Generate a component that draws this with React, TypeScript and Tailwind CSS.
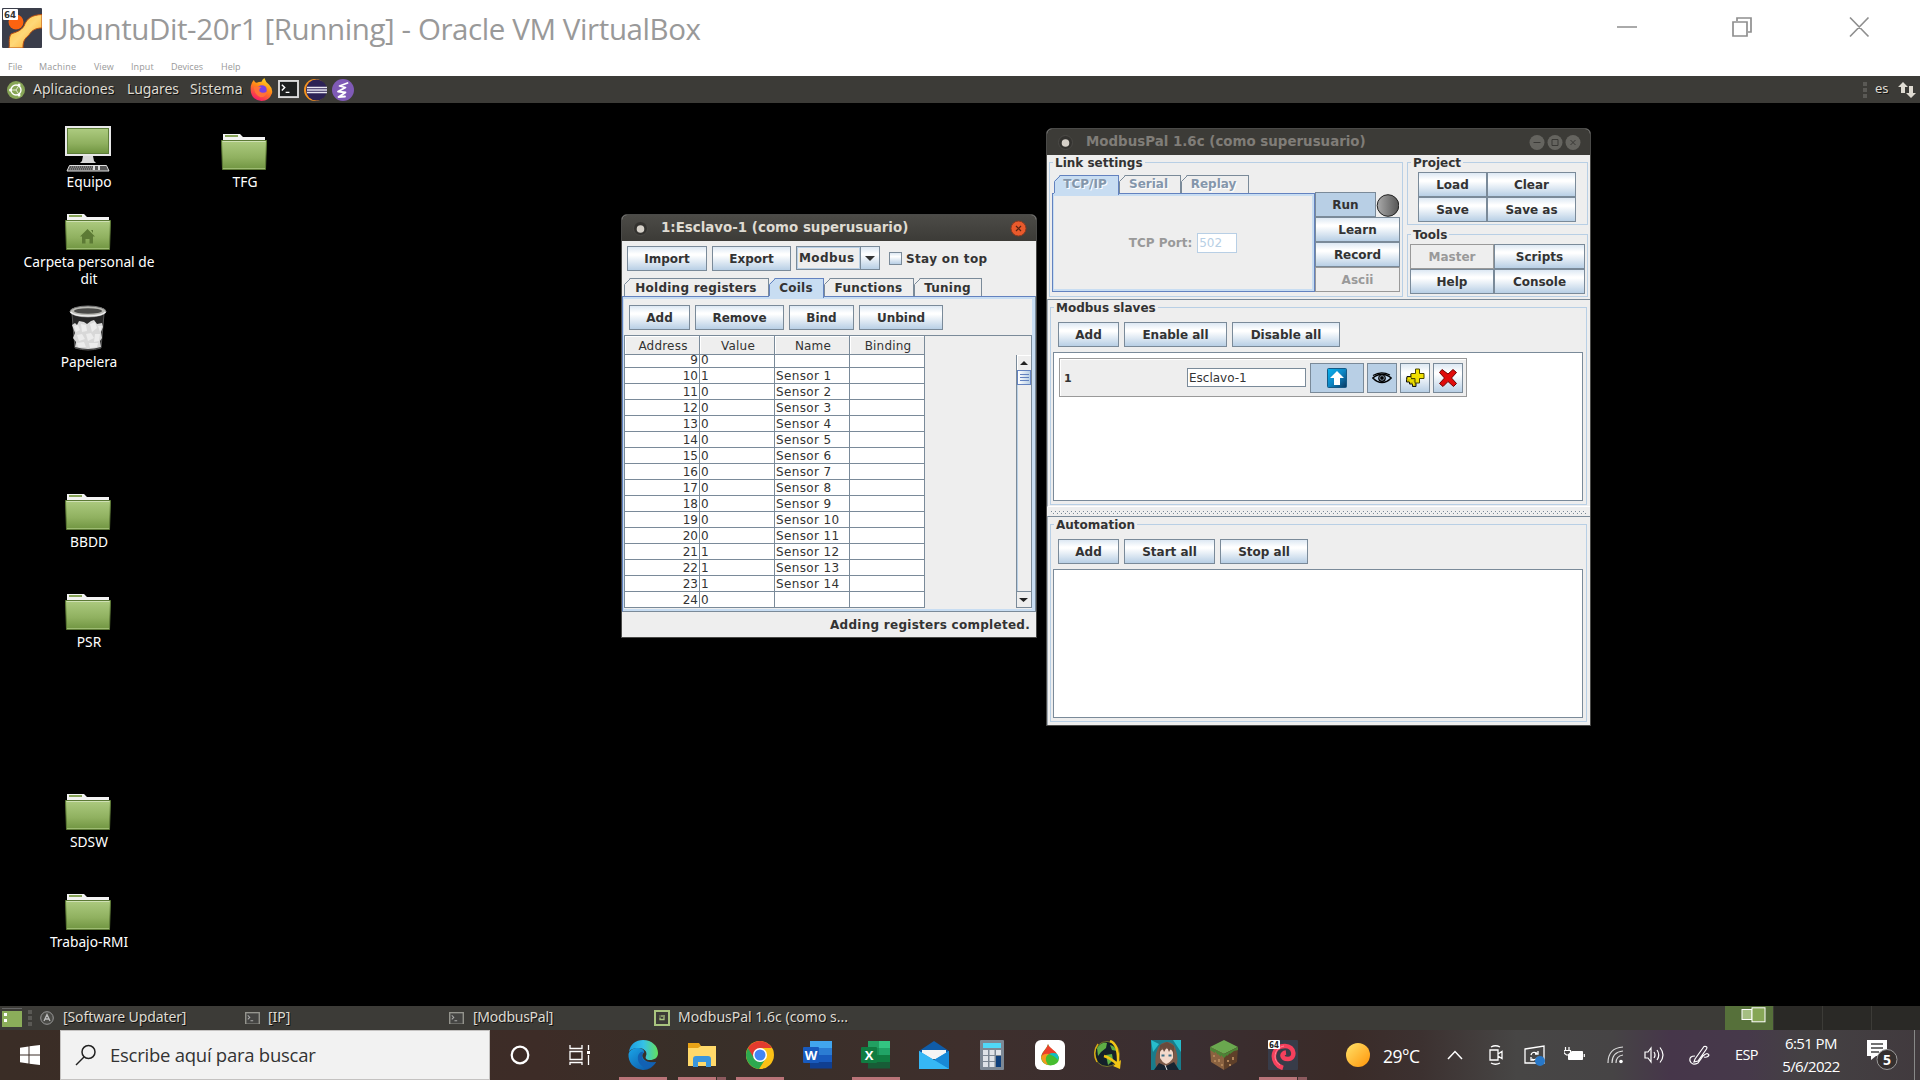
import React from "react";

type Kids = { children?: React.ReactNode };

const METAL =
  "bg-[linear-gradient(180deg,#dde8f3_0%,#ffffff_30%,#ffffff_36%,#b8cfe5_100%)] border border-[#7a8a99] text-[#333]";

function Btn({ w, children, state = "normal" }: Kids & { w: string; state?: "normal" | "on" | "off" }) {
  const look =
    state === "on"
      ? "bg-[#b8cfe5] border border-[#7a8a99] text-[#333]"
      : state === "off"
        ? "bg-[#eee] border border-[#999] text-[#999]"
        : METAL;
  return (
    <div className={`flex h-[25px] shrink-0 items-center justify-center pt-px font-bold ${look} ${w}`}>{children}</div>
  );
}

function Group({ title, className, children }: Kids & { title: string; className: string }) {
  return (
    <div className={`relative border border-[#b8cfe5] ${className}`}>
      <span className="absolute -top-2 left-[3px] bg-[#eee] px-[2px] font-bold leading-[16px] text-[#333]">{title}</span>
      {children}
    </div>
  );
}

function Tab({ w, on, off, children }: Kids & { w: string; on?: boolean; off?: boolean }) {
  return (
    <div className={`relative h-[18px] shrink-0 ${w}`}>
      <div
        className={`absolute inset-0 border-t border-r ${on ? "border-[#6382bf] bg-[#c8ddf2] -bottom-[2px]" : "border-[#7a8a99] bg-[#eee]"} [clip-path:polygon(6px_0,100%_0,100%_100%,0_100%,0_6px)]`}
      />
      <svg className="absolute left-0 top-0" width="7" height="18">
        <path d="M.5 18V6.5L6.5.5" fill="none" stroke={on ? "#6382bf" : "#7a8a99"} />
      </svg>
      <div
        className={`relative flex h-full items-center justify-center font-bold ${off ? "pr-[3px] text-[#8496ab] [text-shadow:1px_1px_0_#fff]" : "pr-px pt-px tracking-[0.25px] text-[#333]"}`}
      >
        {children}
      </div>
    </div>
  );
}

function Folder({ home }: { home?: boolean }) {
  return (
    <svg width="46" height="37" viewBox="0 0 46 37">
      <defs>
        <linearGradient id="fold" x1="0" y1="0" x2="0" y2="1">
          <stop offset="0" stopColor="#adcb80" />
          <stop offset=".6" stopColor="#8fb05f" />
          <stop offset="1" stopColor="#6f9440" />
        </linearGradient>
      </defs>
      <path d="M2 0H19L22 3H44V8H2Z" fill="#f4f4f4" />
      <rect x="4" y="1" width="13" height="2" fill="#8aa65a" />
      <path d="M.5 6.500H45.500L44.500 35.500H1.500Z" fill="url(#fold)" stroke="#5c7a35" />
      <path d="M1.500 7.500H44.500" stroke="#cfe0b4" />
      <path d="M2 34.500H44" stroke="#9dbb72" />
      {home && <path d="M22.500 15L30 22.500H28V29.500H24.500V25H20.500V29.500H17V22.500H15ZM26 16h2v3z" fill="#5c7a35" />}
    </svg>
  );
}

function Computer() {
  return (
    <svg width="46" height="46" viewBox="0 0 46 46">
      <rect width="46" height="30" fill="#e8e8e8" />
      <rect x="2.500" y="2.500" width="41" height="25" fill="url(#fold)" stroke="#5d7d38" />
      <path d="M18 30H28L29 35L31 37H15L17 35Z" fill="#d8d8d8" />
      <path d="M4.500 39.500H41.500L44 45H2Z" fill="#555" stroke="#e0e0e0" />
      <path d="M6 41H28M5 43H28" stroke="#aaa" strokeDasharray="1 1" />
      <path d="M29 40V44M34 40V44" stroke="#ddd" strokeWidth="2" />
    </svg>
  );
}

function Trash() {
  return (
    <svg width="38" height="46" viewBox="0 0 38 46">
      <path d="M3 9L6 43Q19 47 32 43L35 9Z" fill="#262626" stroke="#555" />
      <path d="M3 20L6 18L8 20L10 16L15 17L18 19L22 16L25 15L28 19L33 18L34 22L32 27L33 33L31 36L32 42Q19 46 6 42L7 37L4 33L6 28Z" fill="#d8d8d8" />
      <path d="M5 21L9 20L11 25L7 27ZM12 19L17 20L18 26L13 27ZM21 19L26 17L28 23L23 27ZM29 21L33 21L31 27ZM8 30L13 29L16 34L10 36ZM17 29L22 28L25 33L19 36ZM26 29L31 29L30 36L25 37ZM8 38L15 37L17 42L9 42ZM20 38L29 38L28 42L21 43Z" fill="#ececec" />
      <ellipse cx="19" cy="6.500" rx="18" ry="5.500" fill="#b9b9b4" stroke="#777" />
      <ellipse cx="19" cy="6" rx="14" ry="2.800" fill="#4a4a48" />
      <path d="M1.500 7Q5 11 19 11T36.500 7" fill="none" stroke="#eee" strokeWidth="1.500" />
    </svg>
  );
}

function DeskIcon({ pos, label, children, w = "w-[140px]" }: Kids & { pos: string; label: string; w?: string }) {
  return (
    <div className={`absolute flex flex-col items-center ${w} ${pos}`}>
      {children}
      <div className="pl-[2px] text-center text-[13.750px] leading-[17px] text-white">{label}</div>
    </div>
  );
}

const ROWS: [number, number, string][] = [
  [9, 0, ""], [10, 1, "Sensor 1"], [11, 0, "Sensor 2"], [12, 0, "Sensor 3"], [13, 0, "Sensor 4"], [14, 0, "Sensor 5"],
  [15, 0, "Sensor 6"], [16, 0, "Sensor 7"], [17, 0, "Sensor 8"], [18, 0, "Sensor 9"], [19, 0, "Sensor 10"],
  [20, 0, "Sensor 11"], [21, 1, "Sensor 12"], [22, 1, "Sensor 13"], [23, 1, "Sensor 14"], [24, 0, ""],
];

function Dot() {
  return (
    <svg width="17" height="17" viewBox="0 0 17 17">
      <circle cx="8.500" cy="8.500" r="7" fill="#33322f" stroke="#4b4a46" />
      <circle cx="8.500" cy="9" r="3.800" fill="#d5d0c8" />
    </svg>
  );
}

function SlaveWindow() {
  return (
    <div className="absolute left-[621px] top-[138px] flex h-[424px] w-[416px] flex-col overflow-hidden rounded-t-[6px] border border-[#4a4a48] bg-[#eee] text-[12px] text-[#333]">
      <div className="flex h-[26px] shrink-0 items-center bg-[linear-gradient(#4c4b47,#3c3b37)] pl-[10px] pr-[9px]">
        <Dot />
        <span className="ml-[12px] text-[13.400px] font-bold leading-[16px] text-[#dfdbd2]">1:Esclavo-1 (como superusuario)</span>
        <svg className="ml-auto" width="17" height="17" viewBox="0 0 17 17">
          <circle cx="8.500" cy="8.500" r="7.500" fill="#e95a2c" stroke="#8c3a20" />
          <path d="M6 6L11 11M11 6L6 11" stroke="#5b2413" strokeWidth="1.200" />
        </svg>
      </div>
      <div className="flex h-[37px] shrink-0 pl-[5px] pt-[5px]">
        <Btn w="w-[80px]">Import</Btn>
        <Btn w="w-[79px] ml-[5px]">Export</Btn>
        <div className="ml-[5px] flex h-[24px] w-[84px] border border-[#7a8a99]">
          <div className="flex w-[63px] items-center border border-[#b8cfe5] pl-px font-bold tracking-[0.4px]">Modbus</div>
          <div className="flex flex-1 items-center justify-center border-l border-[#7a8a99] bg-[linear-gradient(180deg,#dde8f3_0%,#ffffff_33%,#b8cfe5_100%)]">
            <svg width="10" height="5"><path d="M0 0H10L5 5Z" fill="#333" /></svg>
          </div>
        </div>
        <div className="ml-[9px] mt-[6px] h-[13px] w-[13px] border border-[#7a8a99] bg-[linear-gradient(180deg,#dde8f3_0%,#ffffff_33%,#b8cfe5_100%)]" />
        <div className="ml-[4px] flex h-[25px] items-center font-bold tracking-[0.35px]">Stay on top</div>
      </div>
      <div className="flex h-[18px] shrink-0 pl-[2px]">
        <Tab w="w-[145px]">Holding registers</Tab>
        <Tab w="w-[55px] z-10" on>Coils</Tab>
        <Tab w="w-[90px]">Functions</Tab>
        <Tab w="w-[68px]">Tuning</Tab>
      </div>
      <div className="flex h-[316px] shrink-0 flex-col border border-[#6382bf] border-b-[#7a8a99] border-r-[#7a8a99]">
        <div className="flex h-full flex-col border-y-2 border-l border-r-[3px] border-[#c8ddf2]">
          <div className="flex h-[35px] shrink-0 pl-[5px] pt-[6px]">
            <Btn w="w-[61px]">Add</Btn>
            <Btn w="w-[89px] ml-[5px]">Remove</Btn>
            <Btn w="w-[65px] ml-[5px]">Bind</Btn>
            <Btn w="w-[84px] ml-[5px]">Unbind</Btn>
          </div>
          <div className="mt-px flex h-[273px] w-[408px] flex-col border border-b-0 border-[#7a8a99]">
            <div className="flex h-[19px] w-[300px] shrink-0 text-center tracking-[0.2px]">
              {["Address", "Value", "Name", "Binding"].map((h) => (
                <div key={h} className="w-[75px] border-b border-r border-[#7a8a99] pl-[2px] leading-[20px] shadow-[inset_1px_1px_0_#fff]">{h}</div>
              ))}
            </div>
            <div className="flex min-h-0 flex-1">
              <div className="flex w-[300px] flex-col justify-end">
                {ROWS.map(([a, v, n], i) => (
                  <div key={a} className={`flex shrink-0 bg-white ${i === 0 ? "h-[13px] leading-[11px]" : "h-[16px] leading-[17px]"}`}>
                    <div className="w-[75px] border-b border-r border-[#7a8a99] pr-px text-right">{a}</div>
                    <div className="w-[75px] border-b border-r border-[#7a8a99] pl-px">{v}</div>
                    <div className="w-[75px] border-b border-r border-[#7a8a99] pl-px tracking-[0.35px]">{n}</div>
                    <div className="w-[75px] border-b border-r border-[#7a8a99]" />
                  </div>
                ))}
              </div>
              <div className="ml-auto flex w-[15px] flex-col border-l border-[#7a8a99]">
                <div className="flex h-[15px] items-center justify-center pr-px shadow-[inset_1px_1px_0_#fff]">
                  <svg width="8" height="4"><path d="M0 4H8L4 0Z" fill="#222" /></svg>
                </div>
                <div className="flex h-[15px] flex-col items-center justify-center gap-px border border-[#6382bf] bg-[linear-gradient(90deg,#fff,#b8cfe5)]">
                  <div className="h-px w-[9px] bg-[#6382bf]" />
                  <div className="mt-px h-px w-[9px] bg-[#6382bf]" />
                  <div className="mt-px h-px w-[9px] bg-[#6382bf]" />
                </div>
                <div className="flex-1 border-l border-[#b8cfe5]" />
                <div className="flex h-[17px] items-center justify-center border-y border-[#7a8a99] pr-px">
                  <svg width="9" height="4"><path d="M0 0H9L4.500 4Z" fill="#222" /></svg>
                </div>
              </div>
            </div>
          </div>
        </div>
      </div>
      <div className="flex h-[25px] items-center justify-end pr-[6px] font-bold tracking-[0.27px]">Adding registers completed.</div>
    </div>
  );
}

function MainWindow() {
  return (
    <div className="absolute left-[1046px] top-[52px] flex h-[598px] w-[545px] flex-col overflow-hidden rounded-t-[6px] border border-[#4a4a48] bg-[#eee] text-[12px] text-[#333]">
      <div className="flex h-[26px] shrink-0 items-center bg-[#3c3b37] pl-[10px] pr-[9px]">
        <Dot />
        <span className="ml-[12px] text-[13.400px] font-bold leading-[16px] text-[#807d78]">ModbusPal 1.6c (como superusuario)</span>
        <svg className="ml-auto" width="52" height="17" viewBox="0 0 52 17">
          <g fill="#65645f">
            <circle cx="8" cy="8.500" r="7.500" />
            <circle cx="26" cy="8.500" r="7.500" />
            <circle cx="44" cy="8.500" r="7.500" />
          </g>
          <path d="M4.500 8.500H11.500M23 5.500H29V11.500H23ZM41.500 6L46.500 11M46.500 6L41.500 11" fill="none" stroke="#3a3936" />
        </svg>
      </div>
      <div className="flex h-[144px] shrink-0 pl-[2px] pt-[7px]">
        <Group title="Link settings" className="h-[135px] w-[354px]">
          <div className="flex pl-[2px] pt-[12px]">
            <div className="w-[263px]">
              <div className="flex pl-[2px]">
                <Tab w="w-[65px] z-10" on off>TCP/IP</Tab>
                <Tab w="w-[62px]" off>Serial</Tab>
                <Tab w="w-[68px]" off>Replay</Tab>
              </div>
              <div className="h-[99px] border border-[#6382bf]">
                <div className="flex h-full items-center justify-center border-y-2 border-l border-r-2 border-[#c8ddf2]">
                  <span className="font-bold text-[#999]">TCP Port:</span>
                  <span className="ml-[5px] flex h-[20px] w-[40px] items-center border border-[#b8cfe5] bg-white pl-px text-[#b8cfe5]">502</span>
                </div>
              </div>
            </div>
            <div className="w-[85px] pt-[17px]">
              <div className="flex items-center">
                <Btn w="w-[61px]" state="on">Run</Btn>
                <svg width="23" height="24" viewBox="0 0 23 24">
                  <defs>
                    <linearGradient id="led"><stop offset="0" stopColor="#aaa" /><stop offset="1" stopColor="#555" /></linearGradient>
                  </defs>
                  <circle cx="12" cy="12.500" r="10.800" fill="url(#led)" stroke="#222" />
                </svg>
              </div>
              <Btn w="w-[85px]">Learn</Btn>
              <Btn w="w-[85px]">Record</Btn>
              <Btn w="w-[85px]" state="off">Ascii</Btn>
            </div>
          </div>
        </Group>
        <div className="ml-[4px]">
          <Group title="Project" className="h-[63px] w-[181px] pl-[10px] pt-[9px]">
            <div className="flex"><Btn w="w-[69px]">Load</Btn><Btn w="w-[89px]">Clear</Btn></div>
            <div className="flex"><Btn w="w-[69px]">Save</Btn><Btn w="w-[89px]">Save as</Btn></div>
          </Group>
          <Group title="Tools" className="mt-[9px] h-[63px] w-[181px] pl-[2px] pt-[9px]">
            <div className="flex"><Btn w="w-[84px]" state="off">Master</Btn><Btn w="w-[91px]">Scripts</Btn></div>
            <div className="flex"><Btn w="w-[84px]">Help</Btn><Btn w="w-[91px]">Console</Btn></div>
          </Group>
        </div>
      </div>
      <div className="h-[208px] shrink-0 border-b border-l border-t border-b-white border-l-[#a3abb5] border-t-[#7a8a99] pl-[2px] pt-[7px]">
        <Group title="Modbus slaves" className="h-[198px] w-[537px] px-[2px] pt-[14px]">
          <div className="flex pl-[5px]">
            <Btn w="w-[61px]">Add</Btn>
            <Btn w="w-[103px] ml-[5px]">Enable all</Btn>
            <Btn w="w-[108px] ml-[5px]">Disable all</Btn>
          </div>
          <div className="mt-[5px] h-[149px] w-[530px] border border-[#7a8a99] bg-white pl-[5px] pt-[5px]">
            <div className="flex h-[39px] w-[408px] border border-[#999] bg-[#eee] pl-[4px] pt-[4px] shadow-[inset_1px_1px_0_#fff]">
              <span className="w-[123px] text-[11px] font-bold leading-[31px]">1</span>
              <span className="mt-[5px] flex h-[19px] w-[119px] items-center border border-[#7a8a99] bg-white pl-px">Esclavo-1</span>
              <span className="ml-[4px] flex h-[30px] w-[54px] items-center justify-center border border-[#7a8a99] bg-[#b8cfe5]">
                <svg width="20" height="20" viewBox="0 0 20 20">
                  <defs><linearGradient id="up" x1="0" y1="0" x2="1" y2="1"><stop offset="0" stopColor="#0ab4f0" /><stop offset=".5" stopColor="#0d86c4" /><stop offset="1" stopColor="#08355e" /></linearGradient></defs>
                  <rect x=".5" y=".5" width="19" height="19" rx="1" fill="url(#up)" stroke="#165a86" />
                  <path d="M10 3L17 10H13V17H7V10H3Z" fill="#fff" />
                </svg>
              </span>
              <span className="ml-[3px] flex h-[30px] w-[30px] items-center justify-center border border-[#7a8a99] bg-[#b8cfe5]">
                <svg width="20" height="12" viewBox="0 0 20 12">
                  <path d="M.8 6Q5 2.200 10 2.200T19.200 6Q15 10.500 10 10.500T.8 6Z" fill="#b8cfe5" stroke="#000" strokeWidth="1.400" />
                  <path d="M1 3.500Q9-1.500 18 3" fill="none" stroke="#000" strokeWidth="1.200" />
                  <circle cx="10" cy="6.200" r="3.800" fill="#000" />
                  <circle cx="10" cy="6" r="2.300" fill="none" stroke="#b8cfe5" strokeWidth=".7" />
                </svg>
              </span>
              <span className={`ml-[3px] flex h-[30px] w-[30px] items-center justify-center ${METAL}`}>
                <svg width="20" height="20" viewBox="0 0 20 20">
                  <path d="M2 8.500H6V6H11V10H14V14H11V18.500H7.500V16H4.500V14H1.500V11.500Z" fill="#c9bc00" stroke="#111" />
                  <path d="M10.500 1H14.500V5.500H19V10.500H14.500V15H10V10.500H6V5.500H10.500Z" fill="#f0e000" stroke="#4b4600" />
                  <path d="M3 10.500H6M4.500 13H8.500M8.500 14V17" fill="none" stroke="#f6e800" strokeWidth="1.300" />
                </svg>
              </span>
              <span className={`ml-[3px] flex h-[30px] w-[30px] items-center justify-center ${METAL}`}>
                <svg width="20" height="20" viewBox="0 0 20 20">
                  <path d="M4 1.500L10 6L15 1.500L18.500 4.500L13.500 10L18.500 15.500L15.500 18.500L10 13.500L5 18.500L1.500 15.500L6.500 10L1.500 4.500Z" fill="#e00b0b" stroke="#6d0000" />
                </svg>
              </span>
            </div>
          </div>
        </Group>
      </div>
      <div className="flex h-[9px] shrink-0 flex-col gap-px px-[4px] pt-[4px]">
        <div className="h-px bg-[repeating-linear-gradient(90deg,#7a8a99_0_1px,#f6f6f6_1px_2px,#eee_2px_4px)]" />
        <div className="ml-[2px] h-px bg-[repeating-linear-gradient(90deg,#7a8a99_0_1px,#f6f6f6_1px_2px,#eee_2px_4px)]" />
      </div>
      <div className="flex-1 border-l border-t border-l-[#a3abb5] border-t-[#7a8a99] pl-[2px] pt-[7px]">
        <Group title="Automation" className="h-[198px] w-[537px] px-[2px] pt-[14px]">
          <div className="flex pl-[5px]">
            <Btn w="w-[61px]">Add</Btn>
            <Btn w="w-[91px] ml-[5px]">Start all</Btn>
            <Btn w="w-[88px] ml-[5px]">Stop all</Btn>
          </div>
          <div className="mt-[5px] h-[149px] w-[530px] border border-[#7a8a99] bg-white" />
        </Group>
      </div>
    </div>
  );
}

function HostTitle() {
  return (
    <div className="flex h-[76px] flex-col bg-white text-[#999]">
      <div className="flex h-[57px] items-start">
        <svg className="ml-[2px] mt-[8px]" width="40" height="40" viewBox="0 0 40 40">
          <defs><linearGradient id="vb" x1="0" y1="0" x2="1" y2="1"><stop offset="0" stopColor="#ffc02e" /><stop offset=".5" stopColor="#ffd878" /><stop offset="1" stopColor="#f9a11b" /></linearGradient></defs>
          <rect width="40" height="40" rx="1" fill="#3a3d4a" />
          <path d="M7 40C8 36 6 31 9 26C14 24 19 23 22 18C25 10 30 7 40 6.500V20C34 20 30 22 27 27C22 31 21 34 21 40Z" fill="url(#vb)" stroke="#b94d10" />
          <circle cx="14" cy="14" r="7.500" fill="#fb6310" />
          <rect x="1" y="1" width="15" height="11" rx="1" fill="#fff" />
          <text x="2" y="10" fontSize="9.500" fontWeight="bold" fontFamily="DejaVu Sans Condensed, DejaVu Sans, sans-serif" textLength="12" lengthAdjust="spacingAndGlyphs" fill="#333">64</text>
        </svg>
        <div className="ml-[5px] mt-[9px] whitespace-nowrap font-['Open_Sans',sans-serif] text-[29.500px] leading-[40px] tracking-[-0.4px]">
          UbuntuDit-20r1 [Running] - Oracle VM VirtualBox
        </div>
        <svg className="ml-auto mr-[50px] mt-[16px]" width="254" height="22" viewBox="0 0 254 22">
          <g fill="none" stroke="#8f8f8f" strokeWidth="1.700">
            <path d="M1 11H21M117 6H131V20H117ZM121 5V2H135V16H132M234 1.500L252.500 20.500M252.500 1.500L234 20.500" />
          </g>
        </svg>
      </div>
      <div className="flex h-[19px] items-center pl-[8px] font-['Open_Sans',sans-serif] text-[9px]">
        <span className="w-[31px]">File</span>
        <span className="w-[55px] tracking-[0.2px]">Machine</span>
        <span className="w-[37px]">View</span>
        <span className="w-[40px] tracking-[0.1px]">Input</span>
        <span className="w-[50px]">Devices</span>
        <span>Help</span>
      </div>
    </div>
  );
}

function Grip() {
  return (
    <div className="flex flex-col gap-[2px]">
      <div className="h-[4px] w-[4px] bg-[#5a5955]" />
      <div className="h-[4px] w-[4px] bg-[#5a5955]" />
      <div className="h-[4px] w-[4px] bg-[#5a5955]" />
    </div>
  );
}

function Firefox() {
  return (
    <svg width="23" height="23" viewBox="0 0 24 24">
      <defs><linearGradient id="ff" x1=".8" y1="0" x2=".3" y2="1"><stop offset="0" stopColor="#ffe226" /><stop offset=".45" stopColor="#ff8a16" /><stop offset="1" stopColor="#f5156c" /></linearGradient></defs>
      <path d="M2 5Q3 3 4 2Q5 5 7 5Q9 4 12 4Q13 1 15 0Q16 4 20 7Q24 11 23 16Q20 24 12 24Q3 23 1 15Q0 9 2 5Z" fill="url(#ff)" />
      <circle cx="12.500" cy="12.500" r="5" fill="#7542e5" />
      <path d="M4 10Q8 8 12 9.500Q9 11 10 14Q13 17 18 14Q17 20 11 20Q5 18 4 10Z" fill="#ff7139" />
    </svg>
  );
}

function TermIcon({ size, dim }: { size: number; dim?: boolean }) {
  return (
    <svg width={size} height={size * 0.86} viewBox="0 0 22 19">
      <rect x="1" y="1" width="20" height="17" fill={dim ? "#444442" : "#1d1f1f"} stroke={dim ? "#96968f" : "#dcdcdc"} strokeWidth="2" />
      <path d="M4 5L7 8L4 11M8 13H12" fill="none" stroke={dim ? "#aaa" : "#fff"} strokeWidth="1.500" />
    </svg>
  );
}

function TopPanel() {
  return (
    <div className="flex h-[27px] items-center bg-[#3c3b37] text-[14px] text-[#dfdbd2] [text-shadow:1px_1px_0_#111]">
      <svg className="ml-[7px]" width="18" height="18" viewBox="0 0 18 18">
        <circle cx="9" cy="9" r="9" fill="#87a556" />
        <circle cx="9" cy="9" r="5" fill="none" stroke="#fff" strokeWidth="1.400" />
        <path d="M4 9H9L12 4.500M9 9L12 13.500" fill="none" stroke="#dfe8cf" />
        <circle cx="3.500" cy="9" r="1.500" fill="#fff" /><circle cx="12" cy="4" r="1.500" fill="#fff" /><circle cx="12" cy="14" r="1.500" fill="#fff" />
      </svg>
      <span className="ml-[8px] w-[94px] pb-[2px]">Aplicaciones</span>
      <span className="w-[63px] pb-[2px] tracking-[-0.1px]">Lugares</span>
      <span className="w-[60px] pb-[2px] tracking-[0.1px]">Sistema</span>
      <Firefox />
      <span className="ml-[5px]"><TermIcon size={21} /></span>
      <svg className="ml-[5px]" width="23" height="22" viewBox="0 0 23 22">
        <circle cx="11" cy="11" r="11" fill="#f7941e" />
        <circle cx="12.500" cy="11" r="10.500" fill="#2c2255" />
        <path d="M3 8.500H23M3 11H23M3 13.500H23" stroke="#e9e7f3" strokeWidth="1.300" />
      </svg>
      <svg className="ml-[5px]" width="22" height="22" viewBox="0 0 22 22">
        <circle cx="11" cy="11" r="11" fill="#7f5ab6" />
        <path d="M15.500 4L7.500 7L13.500 8.500L6 12.500L13.500 13.500L6.500 18L13 17.500" fill="none" stroke="#fff" strokeWidth="1.800" strokeLinejoin="round" strokeLinecap="round" />
      </svg>
      <span className="ml-auto"><Grip /></span>
      <span className="ml-[8px] w-[23px] pb-[2px] text-[13px]">es</span>
      <svg className="mr-[4px]" width="18" height="18" viewBox="0 0 18 18">
        <path d="M5 1L10 6H7V12H3V6H0ZM11 5H15V12H18L13 17L8 12H11Z" fill="#dfdbd2" />
      </svg>
    </div>
  );
}

function BottomPanel() {
  return (
    <div className="flex h-[24px] shrink-0 items-center bg-[#3c3b37] text-[14px] text-[#dfdbd2] [text-shadow:1px_1px_0_#111]">
      <svg className="ml-[2px]" width="20" height="20" viewBox="0 0 20 20">
        <rect width="20" height="1" fill="#666" />
        <rect y="3" width="20" height="16" fill="#8bad5a" />
        <path d="M2 5H5V8H2ZM2 11H5V14H2Z" fill="#fff" />
      </svg>
      <span className="ml-[6px]"><Grip /></span>
      <svg className="ml-[8px]" width="14" height="14" viewBox="0 0 14 14">
        <circle cx="7" cy="7" r="6.300" fill="#4a4a46" stroke="#999" />
        <path d="M4 10L7 3.500L10 10M5 8H9" fill="none" stroke="#bbb" strokeWidth="1.300" />
      </svg>
      <span className="ml-[9px] w-[182px] pb-[3px] tracking-[-0.1px]">[Software Updater]</span>
      <TermIcon size={15} dim />
      <span className="ml-[8px] w-[181px] pb-[3px]">[IP]</span>
      <TermIcon size={15} dim />
      <span className="ml-[9px] w-[181px] pb-[3px] tracking-[-0.25px]">[ModbusPal]</span>
      <svg width="16" height="16" viewBox="0 0 16 16">
        <rect x="1" y="1" width="14" height="14" fill="#3c3b37" stroke="#a9c47f" strokeWidth="2" />
        <path d="M6 5.500V6.500M10 5V9.500H6V7.500M8 5V7" fill="none" stroke="#a9c47f" strokeWidth="1.300" />
      </svg>
      <span className="ml-[8px] pb-[3px]">ModbusPal 1.6c (como s...</span>
      <div className="ml-auto flex h-full gap-px">
        <div className="flex w-[48px] justify-center bg-[#56703a] pl-[8px] pt-px">
          <svg width="25" height="16" viewBox="0 0 25 16">
            <rect x="1" y="2.500" width="10" height="10" fill="#a5be82" stroke="#fff" />
            <rect x="11" y=".8" width="13" height="14" fill="#86a656" stroke="#fff" />
          </svg>
        </div>
        <div className="w-[48px] bg-[#2a2926]" />
        <div className="w-[48px] bg-[#2a2926]" />
        <div className="w-[48px] bg-[#2a2926]" />
      </div>
    </div>
  );
}

function Office({ letter, c }: { letter: string; c: string[] }) {
  return (
    <svg width="30" height="30" viewBox="0 0 30 30">
      <rect x="7" y="1" width="22" height="7" fill={c[0]} />
      <rect x="7" y="8" width="22" height="7" fill={c[1]} />
      <rect x="7" y="15" width="22" height="7" fill={c[2]} />
      <rect x="7" y="22" width="22" height="6.500" fill={c[3]} />
      {letter === "X" && <path d="M7 1H18V22H7Z" fill="#107c41" opacity=".5" />}
      <rect x="0" y="7" width="16" height="16" rx="1" fill={c[4]} />
      <text x="8" y="19.500" textAnchor="middle" fontSize="13" fontWeight="bold" fontFamily="Open Sans, sans-serif" fill="#fff">{letter}</text>
    </svg>
  );
}

function Task({ w = "w-[58px]", bar, children }: Kids & { w?: string; bar?: "one" | "many" }) {
  return (
    <div className={`flex h-[50px] shrink-0 flex-col items-center justify-between pt-[10px] ${w}`}>
      <div className="flex h-[30px] items-center">{children}</div>
      <div className="flex h-[3px] w-[48px]">
        {bar && <div className="flex-1 bg-[#b97478]" />}
        {bar === "many" && <div className="ml-px w-[9px] bg-[#8c5a5e]" />}
      </div>
    </div>
  );
}

function Taskbar() {
  return (
    <div className="flex h-[50px] items-center bg-[linear-gradient(90deg,#3a2d26_0%,#3d2c27_28%,#382f28_36%,#3e2f2c_50%,#3a2e31_62%,#3a2b28_70%,#3c3130_74%,#474645_79%,#464445_84%,#46364a_87%,#46394a_91%,#444143_94%,#413a3e_100%)] font-['Open_Sans',sans-serif] text-white">
      <svg className="ml-[20px]" width="20" height="20" viewBox="0 0 20 20">
        <path d="M0 2.800L8.500 1.500V9.500H0ZM9.500 1.300L20 0V9.500H9.500ZM0 10.500H8.500V18.500L0 17.200ZM9.500 10.500H20V20L9.500 18.700Z" fill="#fff" />
      </svg>
      <div className="ml-[20px] flex h-[50px] w-[430px] items-center border border-[#c4c2c1] bg-[#f2f2f2]">
        <svg className="ml-[14px]" width="22" height="22" viewBox="0 0 22 22">
          <circle cx="13.500" cy="8" r="6.500" fill="none" stroke="#222" strokeWidth="1.500" />
          <path d="M9 13L1 21" stroke="#222" strokeWidth="1.500" />
        </svg>
        <span className="ml-[13px] text-[18.500px] tracking-[-0.25px] text-[#333]">Escribe aquí para buscar</span>
      </div>
      <svg className="ml-[20px]" width="20" height="20" viewBox="0 0 20 20"><circle cx="10" cy="10" r="8.300" fill="none" stroke="#fff" strokeWidth="2.200" /></svg>
      <svg className="ml-[39px]" width="22" height="20" viewBox="0 0 22 20">
        <path d="M1 0V3.500H13V0M1 6.500H13V14.500H1ZM1 20V17.500H13V20M19.500 0V5M19.500 10V20" fill="none" stroke="#fff" strokeWidth="1.300" />
        <rect x="18" y="6" width="3" height="3" fill="#fff" />
      </svg>
      <div className="ml-[22px] flex">
        <Task bar="one" w="w-[60px]">
          <svg width="30" height="30" viewBox="0 0 30 30">
            <defs>
              <linearGradient id="e1"><stop offset="0" stopColor="#1b9de2" /><stop offset=".5" stopColor="#35c1e8" /><stop offset="1" stopColor="#63e05d" /></linearGradient>
              <linearGradient id="e2" x1="0" y1="0" x2="1" y2="1"><stop offset="0" stopColor="#1aa5e8" /><stop offset="1" stopColor="#0b4fa0" /></linearGradient>
            </defs>
            <path d="M1 12C2 4 8 0 15 0C24 0 30 6 30 13C30 18 26 20 22 20C18 20 17 18 18 16C20 11 15 8 11 8C6 8 3 9 1 12Z" fill="url(#e1)" />
            <path d="M.5 14C2 9 7 7.500 11 8C15 8.500 17 11 16 13C13 13 13 24 28 22C25 27 21 30 15 30C5 29 0 22 .5 14Z" fill="url(#e2)" />
            <path d="M10 16C11 13 13 11 16 12C12 15 13 25 28 22C26 26 21 28 18 28C12 26 9 21 10 16Z" fill="#1261b3" />
          </svg>
        </Task>
        <Task bar="many" w="w-[58px]">
          <svg width="28" height="24" viewBox="0 0 28 24">
            <path d="M0 0H11L13 3H28V23H0Z" fill="#e8a317" />
            <path d="M0 5H10L13 3H28V23H0Z" fill="#ffd96a" />
            <path d="M5 24V16Q5 13 8 13H20Q23 13 23 16V24H18V19H10V24Z" fill="#3a96dd" />
          </svg>
        </Task>
        <Task bar="one">
          <svg width="28" height="28" viewBox="0 0 28 28">
            <circle cx="14" cy="14" r="14" fill="#fbc116" />
            <path d="M14 14L1.900 7A14 14 0 0 0 13 28L20 17Z" fill="#2da94f" />
            <path d="M14 14V7H26.100A14 14 0 0 0 1.900 7L8 17Z" fill="#e33b2e" />
            <circle cx="14" cy="14" r="7" fill="#fff" /><circle cx="14" cy="14" r="5.500" fill="#4285f4" />
          </svg>
        </Task>
        <Task><Office letter="W" c={["#41a5ee", "#2b7cd3", "#185abd", "#103f91", "#185abd"]} /></Task>
        <Task bar="one"><Office letter="X" c={["#33c481", "#21a366", "#107c41", "#185c37", "#107c41"]} /></Task>
        <Task w="w-[58px]">
          <svg width="30" height="28" viewBox="0 0 30 28">
            <path d="M0 10L15 0L30 10V14H0Z" fill="#0f5ca8" /><path d="M3 9H27V18H3Z" fill="#f4f4f4" />
            <path d="M0 10L15 19L30 10V28H0Z" fill="#2aa8ee" /><path d="M15 19L30 10V28Z" fill="#1888d6" /><path d="M0 10L30 28H0Z" fill="#36b7f5" />
          </svg>
        </Task>
        <Task w="w-[57px]">
          <svg width="24" height="30" viewBox="0 0 24 30">
            <rect width="24" height="30" rx="1" fill="#7d8894" /><rect x="3" y="3" width="18" height="5" fill="#50d8f8" />
            <path d="M3 10H8V15H3ZM9.500 10H14.500V15H9.500ZM16 10H21V15H16ZM3 16H8V21H3ZM9.500 16H14.500V21H9.500ZM3 22H8V27H3ZM9.500 22H14.500V27H9.500Z" fill="#dfe3e8" />
            <rect x="16" y="16" width="5" height="11" fill="#0d3f7c" />
          </svg>
        </Task>
        <Task w="w-[59px]">
          <svg width="30" height="30" viewBox="0 0 30 30">
            <rect width="30" height="30" rx="6" fill="#fff" />
            <path d="M13 4C14 9 24 13 24 18Q24 25 15.500 25.500Q7 25 6 18C6 12 12 9 13 4Z" fill="#46bd2f" />
            <path d="M13 4C14 8 20 10 22 14Q19 12 15 14Q10 14 6.500 17C6.500 12 12 9 13 4Z" fill="#ec3f2b" />
            <path d="M6 17Q9 13 14 14Q10 16 11 21Q12 24 14 25Q7 24 6 17Z" fill="#f49a1c" /><path d="M14 14Q18 12 22 14Q24 16 23 20Q20 16 14 14Z" fill="#14bcc5" />
          </svg>
        </Task>
        <Task>
          <svg width="30" height="30" viewBox="0 0 30 30">
            <circle cx="14" cy="14" r="12.500" fill="#14202a" stroke="#77742a" />
            <path d="M4 8Q8 2 14 3L13 8L8 12L5 16ZM13 15L19 14L20 20L15 25ZM17 5Q22 6 24 11L19 10Z" fill="#5fae45" />
            <path d="M5 4Q-1 12 4 22" fill="none" stroke="#d6aa13" strokeWidth="1.500" />
            <path d="M17 1Q26 4 25 24M11 16Q18 18 25 25" fill="none" stroke="#f2c515" strokeWidth="2.500" /><path d="M20 26L28 20L27 29Z" fill="#f2c515" />
          </svg>
        </Task>
        <Task>
          <svg width="30" height="30" viewBox="0 0 30 30">
            <rect width="30" height="30" fill="#197c8b" />
            <path d="M0 0L8 4L2 12ZM22 0H30V12Z" fill="#27bdcc" />
            <path d="M5 27Q3 17 7 8Q10 2 16 2Q23 2 25 10Q28 20 25 27Z" fill="#7b5a4a" />
            <path d="M9 11Q15 6 22 11V18Q19 23 15 24Q11 22 9 18Z" fill="#f3d9cb" />
            <path d="M8 15L11 7L13 12L16 7L18 12L20 8L23 15L23 6L16 2L9 5Z" fill="#694a3c" />
            <path d="M10.500 15.500H13.500M17.500 15.500H20.500" stroke="#3d6f86" strokeWidth="2" />
            <path d="M3 30L8 23L15 26L23 22L28 30Z" fill="#182330" /><path d="M14 25L16 30" stroke="#ddd" />
          </svg>
        </Task>
        <Task>
          <svg width="30" height="30" viewBox="0 0 30 30">
            <path d="M1 7L15 0L29 7L15 14Z" fill="#6aa84f" /><path d="M1 7L15 14V30L2 22Z" fill="#8a6240" /><path d="M29 7L15 14V30L28 22Z" fill="#5f4029" />
            <path d="M1 7L15 14V18L12 15V17L9 14V15L6 11V13L1 10ZM29 7L15 14V18L18 15V16L21 13V14L25 11L29 10Z" fill="#4c8436" />
            <path d="M4 15h2v2H4zM9 19h2v3H9zM12 24h2v2h-2zM5 20h2v2H5zM18 20h2v2h-2zM23 17h2v3h-2zM20 24h2v2h-2z" fill="#b08458" />
          </svg>
        </Task>
        <Task bar="many" w="w-[60px]">
          <svg width="30" height="30" viewBox="0 0 30 30">
            <rect width="30" height="30" rx="1" fill="#383c49" />
            <path d="M15 28C2 24 3 6 17 6C27 6 28 19 20 19C13 19 13 13 18 12.500" fill="none" stroke="#f5405c" strokeWidth="4.500" />
            <path d="M12 25C4 20 6 8 16 6" fill="none" stroke="#ff8798" strokeWidth="1" />
            <rect x="0" y="0" width="12" height="9" rx="1" fill="#fff" />
            <text x="1" y="7.500" fontSize="8" fontWeight="bold" fontFamily="DejaVu Sans, sans-serif" textLength="10" lengthAdjust="spacingAndGlyphs" fill="#222">64</text>
          </svg>
        </Task>
      </div>
      <svg className="ml-[33px]" width="24" height="24" viewBox="0 0 24 24">
        <defs><linearGradient id="sun" x1="0" y1="0" x2="1" y2="1"><stop offset="0" stopColor="#ffe36b" /><stop offset="1" stopColor="#ff9408" /></linearGradient></defs>
        <circle cx="12" cy="12" r="12" fill="url(#sun)" />
      </svg>
      <span className="ml-[13px] w-[64px] pt-[2px] text-[17.500px] tracking-[-0.5px]">29°C</span>
      <svg width="16" height="10" viewBox="0 0 16 10"><path d="M1 9L8 1.500L15 9" fill="none" stroke="#fff" strokeWidth="1.500" /></svg>
      <svg className="ml-[25px]" width="16" height="20" viewBox="0 0 16 20">
        <path d="M3 2Q7.500-.5 12 2M3 18Q7.500 20.500 12 18M2 5H10V15H2ZM10 9L14 6.500V13.500L10 11" fill="none" stroke="#fff" strokeWidth="1.300" />
      </svg>
      <svg className="ml-[20px]" width="21" height="21" viewBox="0 0 21 21">
        <path d="M1 4L20 1V18H1ZM14 6V9H11M7 12V15H10M7 10Q8 6 13 8M14 12Q12 16 8 14" fill="none" stroke="#fff" strokeWidth="1.300" />
        <circle cx="16" cy="16" r="5" fill="#2878c8" />
      </svg>
      <svg className="ml-[19px]" width="21" height="16" viewBox="0 0 21 16">
        <path d="M7.500 4.500H18.500V12.500H4.500V8" fill="#fff" stroke="#fff" /><path d="M20.300 7V10M1.500 0V3M5 0V3M0 3.500H6.500V6L4 8H2.500L0 6Z" fill="none" stroke="#fff" strokeWidth="1.200" />
      </svg>
      <svg className="ml-[22px]" width="17" height="18" viewBox="0 0 17 18">
        <path d="M1 17Q1 2 16 1M5 17Q5 6 16 5M9 17Q9 10 16 9" fill="none" stroke="#ddd" strokeWidth="1.200" /><circle cx="14" cy="15.500" r="1.800" fill="#fff" />
      </svg>
      <svg className="ml-[20px]" width="21" height="18" viewBox="0 0 21 18">
        <path d="M1 6H4L7 2V16L4 12H1ZM10 6Q12 9 10 12M13 4Q16.500 9 13 14M16 1.500Q22 9 16 16.500" fill="none" stroke="#fff" strokeWidth="1.200" />
      </svg>
      <svg className="ml-[24px]" width="21" height="20" viewBox="0 0 21 20">
        <path d="M6 14L15 1.500Q19 1 17.500 4L9 16L5 17ZM6 11Q0 11 1 16Q3 21 9 18Q12 14 14 11Q18 7 20 10Q19 13 15 12" fill="none" stroke="#fff" strokeWidth="1.200" />
      </svg>
      <span className="ml-[25px] w-[43px] text-[14.500px] tracking-[-0.6px]">ESP</span>
      <div className="w-[66px] text-center text-[15px] leading-[23px] tracking-[-0.6px]">
        <div>6:51 PM</div>
        <div>5/6/2022</div>
      </div>
      <div className="relative ml-[23px] h-[30px] w-[32px]">
        <svg width="32" height="30" viewBox="0 0 32 30">
          <path d="M0 0H20V16H9L4 20V16H0Z" fill="#fff" /><path d="M4 4H16M4 8H16M4 12H12" stroke="#444" strokeWidth="1.500" />
          <circle cx="20" cy="19.500" r="10" fill="#35302f" stroke="#999" />
        </svg>
        <span className="absolute left-[15px] top-[9px] w-[10px] text-center text-[14px] font-bold leading-[21px]">5</span>
      </div>
      <div className="ml-auto mr-[5px] h-full w-px bg-[#888]" />
    </div>
  );
}

export default function App() {
  return (
    <div className="flex h-[1080px] w-[1920px] flex-col overflow-hidden bg-black font-['DejaVu_Sans',sans-serif]">
      <HostTitle />
      <div className="relative flex flex-1 flex-col font-['DejaVu_Sans',sans-serif]">
        <div className="font-['Noto_Sans',sans-serif]"><TopPanel /></div>
        <div className="flex-1 font-['Noto_Sans',sans-serif]">
          <DeskIcon pos="left-[18px] top-[50px]" label="Equipo"><Computer /><div className="h-px" /></DeskIcon>
          <DeskIcon pos="left-[18px] top-[138px]" label="Carpeta personal de dit"><Folder home /><div className="h-[2px]" /></DeskIcon>
          <DeskIcon pos="left-[18px] top-[229px]" label="Papelera"><Trash /><div className="h-[2px]" /></DeskIcon>
          <DeskIcon pos="left-[174px] top-[58px]" label="TFG"><Folder /><div className="h-[2px]" /></DeskIcon>
          <DeskIcon pos="left-[18px] top-[418px]" label="BBDD"><Folder /><div className="h-[2px]" /></DeskIcon>
          <DeskIcon pos="left-[18px] top-[518px]" label="PSR"><Folder /><div className="h-[2px]" /></DeskIcon>
          <DeskIcon pos="left-[18px] top-[718px]" label="SDSW"><Folder /><div className="h-[2px]" /></DeskIcon>
          <DeskIcon pos="left-[18px] top-[818px]" label="Trabajo-RMI"><Folder /><div className="h-[2px]" /></DeskIcon>
        </div>
        <div className="font-['Noto_Sans',sans-serif]"><BottomPanel /></div>
        <SlaveWindow />
        <MainWindow />
      </div>
      <Taskbar />
    </div>
  );
}
